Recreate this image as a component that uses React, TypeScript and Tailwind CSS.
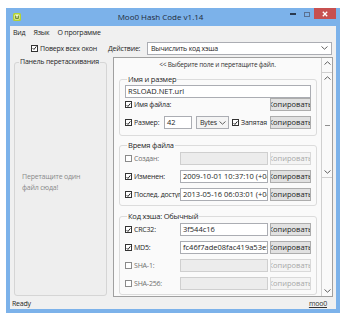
import type { ReactNode } from 'react';

const font = { fontFamily: '"Open Sans", "Noto Sans", sans-serif' };

function Check({ on }: { on?: boolean }) {
  return (
    <span
      className={`w-[7px] h-[7px] border bg-white flex items-center justify-center shrink-0 ${
        on ? 'border-[#333]' : 'border-[#8a8a8a]'
      }`}
    >
      {on && (
        <svg viewBox="0 0 8 8" className="w-[6px] h-[6px]">
          <path d="M1 4.2 L3.1 6.3 L7 1.4" stroke="#1a1a1a" strokeWidth="1.5" fill="none" />
        </svg>
      )}
    </span>
  );
}

function CopyButton({ disabled }: { disabled?: boolean }) {
  return (
    <div
      className={`w-[41px] h-[13px] shrink-0 border flex items-center justify-center overflow-hidden whitespace-nowrap text-[7.5px] tracking-normal leading-none ${
        disabled
          ? 'border-[#d9d9d9] bg-[#f4f4f4] text-[#a8a8a8]'
          : 'border-[#adadad] bg-[#e1e1e1] text-[#1e1e1e]'
      }`}
    >
      Копировать
    </div>
  );
}

function Field({ value, width, disabled }: { value?: string; width: string; disabled?: boolean }) {
  return (
    <div
      className={`${width} h-[13px] shrink-0 border px-[2px] flex items-center overflow-hidden whitespace-nowrap text-[7.5px] tracking-normal leading-none ${
        disabled ? 'border-[#cfcfcf] bg-[#ececec]' : 'border-[#abadb3] bg-white text-[#1e1e1e]'
      }`}
    >
      {value}
    </div>
  );
}

function Chevron({ up }: { up?: boolean }) {
  return (
    <svg viewBox="0 0 7 4" className="w-[7px] h-[4px]">
      <path
        d={up ? 'M0.5 3.5 L3.5 0.8 L6.5 3.5' : 'M0.5 0.5 L3.5 3.2 L6.5 0.5'}
        stroke="#606060"
        strokeWidth="1"
        fill="none"
      />
    </svg>
  );
}

function Group({ title, children, className }: { title: string; children: ReactNode; className: string }) {
  return (
    <fieldset className={`ml-[5px] w-[198px] border border-[#dcdcdc] rounded-[3px] px-[5px] ${className}`}>
      <legend className="ml-[2px] px-[1px] text-[7.5px] leading-[10px] text-[#1e1e1e] whitespace-nowrap">{title}</legend>
      {children}
    </fieldset>
  );
}

function Row({ on, label, value, disabled, className }: { on?: boolean; label: string; value?: string; disabled?: boolean; className: string }) {
  return (
    <div className={`flex items-center h-[13px] ${className}`}>
      <div className="w-[55px] flex items-center gap-[2px] overflow-hidden whitespace-nowrap">
        <Check on={on} />
        <span className={`text-[7px] leading-none ${disabled ? 'text-[#707070]' : 'text-[#1e1e1e]'}`}>{label}</span>
      </div>
      <Field value={value} width="w-[88px]" disabled={disabled} />
      <div className="ml-[2px]">
        <CopyButton disabled={disabled} />
      </div>
    </div>
  );
}

export default function App() {
  return (
    <div className="w-[346px] h-[320px] bg-white pt-[8px] pl-[6px] tracking-[-0.2px]" style={font}>
      <div className="w-[334px] h-[305px] bg-[#7cb2ea] flex flex-col px-[4px] pb-[4px]">
        {/* title bar */}
        <div className="h-[18px] flex items-center relative">
          <svg viewBox="0 0 8 8" className="w-[8px] h-[8px] ml-[3px]">
            <rect x="0" y="0" width="8" height="8" rx="1.5" fill="#b5d334" />
            <rect x="1.5" y="1.5" width="5" height="5" rx="1" fill="#f4f9d8" />
            <path d="M2.5 2.5 V5.5 H5.5 V2.5 M4 3.2 V5.5" stroke="#5a7a10" strokeWidth="0.8" fill="none" />
          </svg>
          <div className="flex-1 text-center text-[8px] tracking-normal leading-none text-[#1e2a3a] pl-[14px]">Moo0 Hash Code v1.14</div>
          <div className="flex items-start h-full">
            <div className="w-[14px] h-[12px] flex items-center justify-center">
              <span className="w-[6px] h-[2px] bg-[#2a3a50]" />
            </div>
            <div className="w-[14px] h-[12px] flex items-center justify-center">
              <span className="w-[6px] h-[5px] border border-[#5a7090]" />
            </div>
            <div className="w-[22px] h-[11px] bg-[#c75050] flex items-center justify-center">
              <svg viewBox="0 0 6 6" className="w-[6px] h-[6px]">
                <path d="M0.8 0.8 L5.2 5.2 M5.2 0.8 L0.8 5.2" stroke="#fff" strokeWidth="1.3" />
              </svg>
            </div>
          </div>
        </div>

        <div className="flex-1 bg-[#f0f0f0] flex flex-col">
          {/* menu */}
          <div className="h-[13px] flex items-center pl-[3px] gap-[8px] text-[7px] leading-none text-[#1e1e1e]">
            <span>Вид</span>
            <span>Язык</span>
            <span>О программе</span>
          </div>

          {/* top row */}
          <div className="h-[18px] flex items-center">
            <div className="w-[98px] pl-[21px] flex items-center gap-[2px]">
              <Check on />
              <span className="text-[7px] leading-none text-[#1e1e1e] whitespace-nowrap">Поверх всех окон</span>
            </div>
            <span className="w-[39px] text-[7px] leading-none text-[#1e1e1e]">Действие:</span>
            <div className="w-[185px] h-[13px] border border-[#abadb3] bg-white flex items-center pl-[3px] pr-[3px] text-[7px] leading-none text-[#1e1e1e]">
              <span className="flex-1">Вычислить код хэша</span>
              <Chevron />
            </div>
          </div>

          {/* main */}
          <div className="h-[240px] flex">
            <fieldset className="ml-[4px] w-[93px] h-[239px] border border-[#d5d5d5] rounded-[3px] bg-[#eeeeee]">
              <legend className="ml-[4px] px-[1px] text-[7px] leading-[10px] text-[#1e1e1e] whitespace-nowrap">Панель перетаскивания</legend>
              <div className="pl-[7px] pt-[104px] text-[7px] leading-[11px] text-[#8a8a8a]">
                Перетащите один
                <br />
                файл сюда!
              </div>
            </fieldset>

            <div className="ml-[6px] w-[220px] h-[240px] border border-[#a0a0a0] bg-[#fafafa] flex">
              <div className="flex-1 flex flex-col">
                <div className="h-[16px] pt-[1px] text-center text-[6.5px] leading-[11px] text-[#333]">
                  &lt;&lt; Выберите поле и перетащите файл.
                </div>

                <Group title="Имя и размер" className="pb-[6px]">
                  <div className="mt-[1px]">
                    <Field value="RSLOAD.NET.url" width="w-[186px]" />
                  </div>
                  <div className="flex items-center h-[13px]">
                    <div className="flex-1 flex items-center gap-[2px]">
                      <Check on />
                      <span className="text-[7px] leading-none text-[#1e1e1e]">Имя файла:</span>
                    </div>
                    <CopyButton />
                  </div>
                  <div className="flex items-center h-[13px] mt-[5px]">
                    <div className="w-[39px] flex items-center gap-[2px]">
                      <Check on />
                      <span className="text-[7px] leading-none text-[#1e1e1e]">Размер:</span>
                    </div>
                    <Field value="42" width="w-[28px]" />
                    <div className="ml-[4px] w-[33px] h-[13px] border border-[#abadb3] bg-[#f4f4f4] flex items-center pl-[3px] pr-[2px] text-[7px] leading-none text-[#1e1e1e]">
                      <span className="flex-1">Bytes</span>
                      <Chevron />
                    </div>
                    <div className="ml-[3px] flex-1 flex items-center gap-[2px] overflow-hidden whitespace-nowrap">
                      <Check on />
                      <span className="text-[7px] leading-none text-[#1e1e1e]">Запятая</span>
                    </div>
                    <CopyButton />
                  </div>
                </Group>

                <Group title="Время файла" className="mt-[4px] pb-[4px]">
                  <Row label="Создан:" disabled className="mt-[2px]" />
                  <Row on label="Изменен:" value="2009-10-01 10:37:10 (+04:00)" className="mt-[5px]" />
                  <Row on label="Послед. доступ:" value="2013-05-16 06:03:01 (+04:00)" className="mt-[5px]" />
                </Group>

                <Group title="Код хэша: Обычный" className="mt-[5px] pb-[4px]">
                  <Row on label="CRC32:" value="3f544c16" className="mt-[2px]" />
                  <Row on label="MD5:" value="fc46f7ade08fac419a53e55b" className="mt-[5px]" />
                  <Row label="SHA-1:" disabled className="mt-[5px]" />
                  <Row label="SHA-256:" disabled className="mt-[5px]" />
                </Group>
              </div>

              {/* scroll column */}
              <div className="w-[11px] border-l border-[#d0d0d0] flex flex-col items-center">
                <div className="h-[10px] flex items-center">
                  <Chevron up />
                </div>
                <div className="mt-[4px] w-full h-[106px] border-y border-[#d0d0d0] flex flex-col items-center justify-between py-[3px]">
                  <Chevron up />
                  <span className="w-[5px] h-[1px] bg-[#909090]" />
                  <Chevron />
                </div>
                <div className="flex-1" />
                <div className="h-[10px] flex items-center">
                  <Chevron />
                </div>
              </div>
            </div>
          </div>

          {/* status bar */}
          <div className="flex-1 flex items-center justify-between pl-[2px] pr-[9px] text-[7px] leading-none text-[#1e1e1e]">
            <span>Ready</span>
            <span className="underline text-[#333]">moo0</span>
          </div>
        </div>
      </div>
    </div>
  );
}
